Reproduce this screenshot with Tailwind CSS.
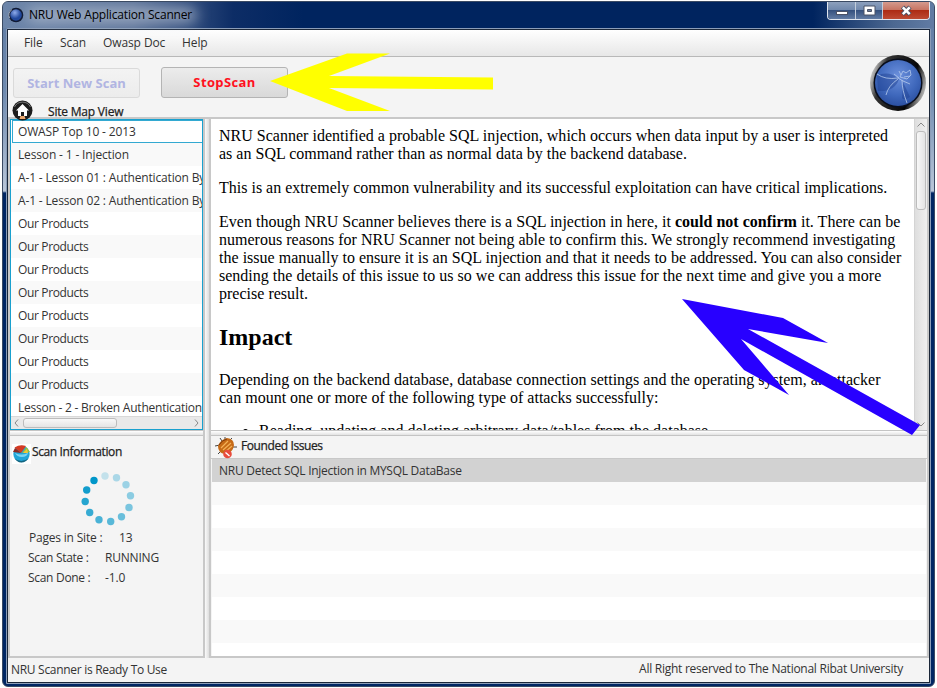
<!DOCTYPE html>
<html lang="en">
<head>
<meta charset="utf-8">
<title>NRU Web Application Scanner</title>
<script src="https://cdn.jsdelivr.net/npm/@tailwindcss/browser@4"></script>
</head>
<body class="bg-white w-[937px] h-[688px] overflow-hidden relative font-['Open_Sans','Noto_Sans',sans-serif] text-[12px] text-[#333] tracking-[-0.15px]">
<div class="w-[933px] h-[686px] ml-[2px] rounded-[6px] overflow-hidden flex flex-col mt-px border border-[#3a4a63] bg-[linear-gradient(180deg,#5f7ba3_0,#6f8bb0_90px,#b9c6d8_189px,#002663_191px)]">
  <!-- title bar -->
  <header class="h-[26px] shrink-0 flex items-start bg-[linear-gradient(90deg,#6d86aa_0,#5c7399_130px,#0d2d66_230px,#00245f_300px,#00245f_810px,#4c6891_890px,#627ca4_100%)]">
    <div class="relative flex items-center h-[26px] pl-[5px] w-[205px]">
      <div class="absolute left-[24px] top-[6px] w-[170px] h-[14px] rounded-full bg-[#b0bccd]/80 blur-[7px]"></div>
      <svg class="relative" width="16" height="16" viewBox="0 0 16 16"><defs><radialGradient id="s" cx=".4" cy=".3"><stop offset="0" stop-color="#8eabea"/><stop offset="1" stop-color="#21489c"/></radialGradient></defs><circle cx="8" cy="8" r="7.3" fill="#111b35"/><circle cx="8" cy="8" r="5.8" fill="url(#s)"/><path d="M1.5 11A7 7 0 0 1 4 2.5" stroke="#a4adb9" fill="none"/></svg>
      <span class="relative ml-[5px] text-black whitespace-nowrap tracking-[-0.17px]">NRU Web Application Scanner</span>
    </div>
    <div class="ml-auto mr-[4px] flex h-[18px] border border-t-0 border-[#dfe5ee] rounded-b-[4px] overflow-hidden">
      <div class="w-[28px] border-r border-[#c3cddb] bg-[linear-gradient(#8da0bd_0,#7189ad_45%,#35517f_50%,#617ba3_100%)] flex items-end justify-center pb-[4px]"><div class="w-[12px] h-[4px] bg-white border border-[#4b5266]"></div></div>
      <div class="w-[27px] border-r border-[#c3cddb] bg-[linear-gradient(#8da0bd_0,#7189ad_45%,#35517f_50%,#617ba3_100%)] flex items-center justify-center"><svg width="13" height="11"><path d="M1 1h11v9H1z" fill="#fff" stroke="#4b5266"/><path d="M4.500 4.500h4v2h-4z" fill="#6a7f9f" stroke="#4b5266"/></svg></div>
      <div class="w-[46px] bg-[linear-gradient(#d49a8d_0,#c87563_45%,#ad2b14_50%,#bd4a33_100%)] flex items-center justify-center"><svg width="13" height="12"><path d="M2.500 2 10 9.500M10 2 2.500 9.500" stroke="#4b5266" stroke-width="4.500"/><path d="M2.800 2.300 9.700 9.200M9.700 2.300 2.800 9.200" stroke="#fff" stroke-width="2.500"/></svg></div>
    </div>
  </header>

  <!-- client area -->
  <main class="ml-[3px] mr-[3px] h-[656px] shrink-0 border border-[#8b9db8] rounded-t-[2px]">
   <div class="h-full border border-[#1a2638] bg-[#f4f4f4] flex flex-col overflow-hidden">
    <nav class="h-[27px] shrink-0 flex items-center pl-[16px] gap-[18px] bg-linear-to-b from-white to-[#e7e7e7] border-b border-[#b8b8b8] tracking-[-0.1px]">
      <span class="w-[18px]">File</span><span class="w-[25px]">Scan</span><span class="w-[61px] whitespace-nowrap">Owasp Doc</span><span>Help</span>
    </nav>
    <div class="h-[62px] shrink-0 relative flex items-start pl-[5px] border-b-2 border-[#c8c8c8]">
      <div class="mt-[11px] w-[127px] h-[30px] pt-px rounded-[3px] border border-[#dadada] bg-linear-to-b from-[#f3f3f3] to-[#ececec] flex items-center justify-center font-bold text-[13px] text-[#b1b5e2] tracking-normal"><span>Start New Scan</span></div>
      <div class="ml-[21px] mt-[10px] w-[127px] h-[31px] rounded-[3px] border border-[#b4b4b4] bg-linear-to-b from-[#ececec] to-[#d9d9d9] flex items-center justify-center font-bold text-[13px] text-[#ff1020] tracking-[0.37px]"><span>StopScan</span></div>
      <svg class="absolute left-[4px] top-[43px]" width="21" height="21" viewBox="0 0 21 21"><circle cx="10.500" cy="10.500" r="10" fill="#1d1d1d"/><path d="M2.500 7A9 9 0 0 1 18.500 7" stroke="#777" fill="none"/><path d="M4 10.500 10.500 4l6.500 6.500h-2V16h-3v-4H9v4H6v-5.500z" fill="#fff"/><path d="M8.500 16h4l1 3h-6z" fill="#efaa70"/></svg>
      <span class="absolute left-[40px] top-[46px] leading-[18px] whitespace-nowrap font-medium text-[#222] tracking-[-0.2px] [-webkit-text-stroke:0.25px_#222]">Site Map View</span>
    </div>

    <div class="flex h-[539px] shrink-0 border-l-2 border-[#c8c8c8]">
      <!-- left column -->
      <div class="w-[193px] shrink-0 flex flex-col">
        <div class="h-[311px] shrink-0 border border-[#0096c9]/90 bg-white overflow-hidden flex flex-col leading-[23px] whitespace-nowrap tracking-[-0.35px]">
          <div class="h-[23px] shrink-0 ml-px border border-r-0 border-[#0093c5]/80 leading-[22px] pl-[5px] tracking-[-0.15px]">OWASP Top 10 - 2013</div>
          <div class="h-[23px] shrink-0 pl-[7px] bg-[#f9f9f9] tracking-[-0.15px]">Lesson - 1 - Injection</div>
          <div class="h-[23px] shrink-0 pl-[7px] tracking-[-0.16px]">A-1 - Lesson 01 : Authentication By</div>
          <div class="h-[23px] shrink-0 pl-[7px] bg-[#f9f9f9] tracking-[-0.16px]">A-1 - Lesson 02 : Authentication By</div>
          <div class="h-[23px] shrink-0 pl-[7px]">Our Products</div>
          <div class="h-[23px] shrink-0 pl-[7px] bg-[#f9f9f9]">Our Products</div>
          <div class="h-[23px] shrink-0 pl-[7px]">Our Products</div>
          <div class="h-[23px] shrink-0 pl-[7px] bg-[#f9f9f9]">Our Products</div>
          <div class="h-[23px] shrink-0 pl-[7px]">Our Products</div>
          <div class="h-[23px] shrink-0 pl-[7px] bg-[#f9f9f9]">Our Products</div>
          <div class="h-[23px] shrink-0 pl-[7px]">Our Products</div>
          <div class="h-[23px] shrink-0 pl-[7px] bg-[#f9f9f9]">Our Products</div>
          <div class="h-[20px] shrink-0 pl-[7px] overflow-hidden tracking-[-0.23px]">Lesson - 2 - Broken Authentication</div>
          <div class="h-[13px] shrink-0 bg-[#e9e9e9] flex items-center justify-between px-[3px] border-t border-[#d9d9d9]">
            <svg width="5" height="8"><path d="M4 .5 1 4l3 3.500" stroke="#888" fill="none"/></svg>
            <div class="w-[94px] h-[10px] ml-[4px] mr-auto border border-[#bcbcbc] rounded-[3px] bg-linear-to-b from-[#f8f8f8] to-[#e4e4e4]"></div>
            <svg width="5" height="8"><path d="M1 .5 4 4 1 7.500" stroke="#888" fill="none"/></svg>
          </div>
        </div>
        <div class="h-[6px] shrink-0 border-y border-[#c4c4c4] bg-linear-to-b from-white to-[#e2e2e2]"></div>
        <div class="flex-1 border-b-2 border-[#c8c8c8] bg-[#f4f4f4]">
          <div class="flex items-start h-[36px] pt-[8px] pl-[2px]">
            <svg width="19" height="20" viewBox="0 0 19 20"><path d="M0 0h19v20H0z" fill="#fff"/><circle cx="9.500" cy="10" r="8.200" fill="#20a5d8"/><path d="M2 14q7 6 15 0l-3 3q-5 3-9 0z" fill="#15657f"/><path d="M9 9 2.500 3.500Q8 0 14 2z" fill="#d43a22"/><path d="M9 9 1 8 3 4z" fill="#8d2a22"/><path d="M10 9l4.500-6L18 8z" fill="#8fc043"/><path d="M11 9l4-4 1 4z" fill="#f2c638"/><path d="M3 9q6 3 13 0-1 4-6 4T3 9" fill="#79d4f4"/></svg>
            <span class="ml-[1px] leading-[16px] text-[#222] tracking-[-0.38px] [-webkit-text-stroke:0.25px_#222]">Scan Information</span>
          </div>
          <svg class="ml-[71px] relative -top-px" width="54" height="55" viewBox="0 0 54 55" fill="#0096c9"><circle cx="24" cy="5" r="3.700" opacity=".2"/><circle cx="35.500" cy="6.700" r="3.700" opacity=".3"/><circle cx="45" cy="13.700" r="3.700" opacity=".36"/><circle cx="49.500" cy="24.700" r="3.700" opacity=".43"/><circle cx="48" cy="36.500" r="3.700" opacity=".5"/><circle cx="40.500" cy="45.700" r="3.700" opacity=".57"/><circle cx="29.700" cy="50.500" r="3.700" opacity=".64"/><circle cx="18" cy="48.700" r="3.700" opacity=".7"/><circle cx="8.700" cy="41.500" r="3.700" opacity=".78"/><circle cx="4.200" cy="30.500" r="3.700" opacity=".85"/><circle cx="5.700" cy="19" r="3.700" opacity=".93"/><circle cx="13" cy="9.500" r="3.700"/></svg>
          <div class="pl-[18px] leading-[20px] pt-[1px] whitespace-nowrap">
            <div class="flex pl-px"><span class="w-[90px] tracking-[-0.2px]">Pages in Site :</span><span>13</span></div>
            <div class="flex"><span class="w-[77px] tracking-[-0.3px]">Scan State :</span><span class="tracking-[-0.2px]">RUNNING</span></div>
            <div class="flex"><span class="w-[77px] tracking-[-0.3px]">Scan Done :</span><span>-1.0</span></div>
          </div>
        </div>
      </div>
      <!-- split divider -->
      <div class="w-[8px] shrink-0 border-l-2 border-r-2 border-[#c8c8c8] bg-linear-to-r from-[#fafafa] to-[#dedede]"></div>
      <!-- right column -->
      <div class="flex-1 min-w-0 flex flex-col border-r-2 border-b-2 border-[#c8c8c8]">
        <div class="h-[311px] shrink-0 flex bg-white">
          <article class="flex-1 min-w-0 overflow-hidden pt-[8px] pl-[8px] font-['Liberation_Serif',serif] text-[16px] leading-[18px] text-black tracking-normal whitespace-nowrap">
            <p class="mb-[16px] tracking-[0.01px]">NRU Scanner identified a probable SQL injection, which occurs when data input by a user is interpreted<br>as an SQL command rather than as normal data by the backend database.</p>
            <p class="mb-[16px]">This is an extremely common vulnerability and its successful exploitation can have critical implications.</p>
            <p class="tracking-[0.01px]">Even though NRU Scanner believes there is a SQL injection in here, it <b>could not confirm</b> it. There can be<br>numerous reasons for NRU Scanner not being able to confirm this. We strongly recommend investigating<br><span class="tracking-[0.02px]">the issue manually to ensure it is an SQL injection and that it needs to be addressed. You can also consider</span><br>sending the details of this issue to us so we can address this issue for the next time and give you a more<br>precise result.</p>
            <h2 class="my-[20px] text-[24px] leading-[28px] font-bold">Impact</h2>
            <p class="mb-[15px]">Depending on the backend database, database connection settings and the operating system, an attacker<br>can mount one or more of the following type of attacks successfully:</p>
            <ul class="list-disc pl-[40px]"><li>Reading, updating and deleting arbitrary data/tables from the database</li></ul>
          </article>
          <div class="w-[13px] shrink-0 bg-linear-to-r from-[#dedede] to-[#efefef] border-l border-[#d4d4d4] flex flex-col items-center py-[3px]">
            <svg width="8" height="5"><path d="M.5 4.500 4 1l3.500 3.500" stroke="#888" fill="none"/></svg>
            <div class="w-[10px] h-[79px] mt-[4px] mb-auto border border-[#bcbcbc] rounded-[3px] bg-linear-to-r from-[#f8f8f8] to-[#e4e4e4]"></div>
            <svg width="8" height="5"><path d="M.5 .5 4 4 7.500 .5" stroke="#888" fill="none"/></svg>
          </div>
        </div>
        <div class="h-[6px] shrink-0 border-y border-[#c4c4c4] bg-linear-to-b from-white to-[#e2e2e2]"></div>
        <div class="h-[23px] shrink-0 flex items-center pl-[4px] border-b border-[#c8c8c8]">
          <svg class="shrink-0 overflow-visible" width="22" height="23" viewBox="0 0 22 23"><path d="M0 10l5-1M3 18l3-3M7 5 5 2M15 4l2-2M18 11h4M10 4V1" stroke="#444" stroke-width="1" fill="none"/><path d="M3 10Q5 4 12 2q7 1 7 7-1 8-9 9-7-1-7-8" fill="#c66a16"/><path d="M6 12 13 5M8 14 16 7M10 16l7-6" stroke="#f4b257" stroke-width="1.200"/><path d="M4 9q3-5 8-6" stroke="#7c3b0c" fill="none"/><circle cx="12.500" cy="18" r="4.300" fill="#e84c3d"/><path d="m10.500 16.500 4 3.500" stroke="#fff" stroke-width="1.400"/></svg>
          <span class="ml-[4px] text-[#222] tracking-[-0.4px] relative -top-px [-webkit-text-stroke:0.25px_#222]">Founded Issues</span>
        </div>
        <div class="flex-1 flex flex-col mx-px overflow-hidden">
          <div class="h-[23px] shrink-0 leading-[23px] pl-[7px] bg-[#d2d2d2] tracking-[-0.27px]">NRU Detect SQL Injection in MYSQL DataBase</div>
          <div class="flex-1 bg-[repeating-linear-gradient(180deg,#f9f9f9_0,#f9f9f9_23px,#fff_23px,#fff_46px)]"></div>
        </div>
      </div>
    </div>

    <footer class="flex-1 flex items-center justify-between pl-[3px] pr-[26px] whitespace-nowrap">
      <span class="tracking-[-0.3px]">NRU Scanner is Ready To Use</span><span class="tracking-[-0.26px] relative -top-px">All Right reserved to The National Ribat University</span>
    </footer>
   </div>
  </main>
</div>

<!-- logo and annotation arrows -->
<svg class="absolute left-0 top-0 pointer-events-none" width="937" height="688" viewBox="0 0 937 688">
  <defs>
    <radialGradient id="g" cx=".5" cy=".35" r=".7"><stop offset="0" stop-color="#6c90dc"/><stop offset=".6" stop-color="#3f68bc"/><stop offset="1" stop-color="#274b9c"/></radialGradient>
    <linearGradient id="r" x1="0" y1=".3" x2="1" y2=".6"><stop offset="0" stop-color="#e0e0e0"/><stop offset=".22" stop-color="#333"/><stop offset=".75" stop-color="#050505"/><stop offset="1" stop-color="#bbb"/></linearGradient>
  </defs>
  <circle cx="898" cy="83" r="28" fill="url(#r)"/>
  <circle cx="898" cy="83" r="24.500" fill="#080d1c"/>
  <circle cx="898" cy="83" r="23" fill="url(#g)"/>
  <path d="M877 76q11-6 22 3-4 13-21 12M903 82l7 15q-6 4-8 1z" fill="#1c3f8f" opacity=".45"/>
  <path d="M877 74q8 6 21 4l5 3M898 79q-10 7-12 16M902 80q0 10 5 23M899 78l-5-4M903 81l7 3M904 77l6-1M901 75l-2-4M900 77l3-6 3 2 4-3 1 5-4 4z" stroke="#b6caec" stroke-width=".8" fill="none"/>
  <path d="M270 81 347 53.500H390L329 76 493 77.500V89.500L329 88 390 111H347Z" fill="#ff0"/>
  <path d="M682 299 783 318 828 343 748 329 920 425 912 435 741 339 789 395 744 370Z" fill="#2800ff"/>
</svg>
</body>
</html>
